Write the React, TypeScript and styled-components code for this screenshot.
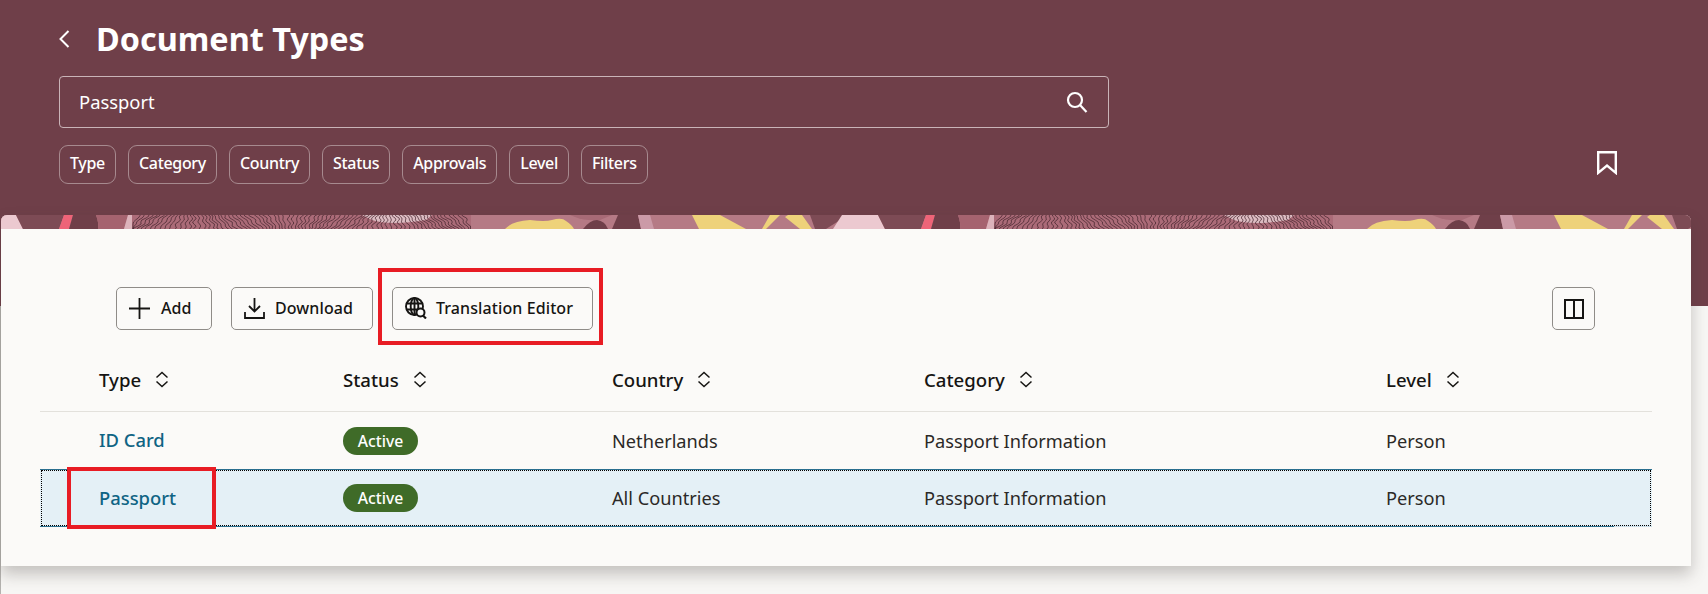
import React from "react";
import styled, { createGlobalStyle } from "styled-components";

const Global = createGlobalStyle`
  html, body { margin: 0; padding: 0; background: #f7f6f4; }
  body { font-family: "Noto Sans", "Open Sans", sans-serif; color: #161513; overflow: hidden; }
`;

const Page = styled.div`
  width: 1708px;
  height: 594px;
  overflow: hidden;
  background: linear-gradient(#b4b2af, #b4b2af) no-repeat 0 0 / 1px 100%, #f7f6f4;
`;

const Hero = styled.header`
  height: 306px;
  box-sizing: border-box;
  background: #6f3f49;
  padding: 19px 91px 0 59px;
  color: #fff;
`;

const TitleRow = styled.div`
  display: flex;
  align-items: center;
  height: 40px;
  gap: 26px;
`;

const BackButton = styled.span`
  display: flex;
  width: 11px;
  color: #fff;
`;

const Title = styled.h1`
  margin: -2px 0 0;
  font-size: 32.4px;
  font-weight: 700;
  line-height: 40px;
`;

const SearchBox = styled.div`
  width: 1050px;
  height: 52px;
  box-sizing: border-box;
  margin-top: 17px;
  padding: 0 20px 0 19px;
  display: flex;
  align-items: center;
  justify-content: space-between;
  border: 1px solid #c9b4b8;
  border-radius: 4px;
  font-size: 18.4px;
`;

const SearchText = styled.span`
  margin-top: -2px;
`;

const ChipRow = styled.div`
  display: flex;
  align-items: center;
  justify-content: space-between;
  margin-top: 17px;
`;

const Chips = styled.div`
  display: flex;
  gap: 12px;
`;

const Chip = styled.span`
  height: 39px;
  box-sizing: border-box;
  display: inline-flex;
  align-items: center;
  padding: 0 10px 3px;
  border: 1px solid #a78a8f;
  border-radius: 9px;
  font-size: 16px;
  font-weight: 500;
  letter-spacing: -0.32px;
`;

const Bookmark = styled.svg`
  margin-top: -3px;
`;

const Card = styled.section`
  position: relative;
  width: 1690px;
  height: 351px;
  margin: -91px 0 0 1px;
  background: #fbfaf8;
  border-radius: 6px 6px 0 0;
  box-shadow: 0 8px 16px rgba(60, 55, 50, 0.28);
`;

const Banner = styled.svg`
  display: block;
  width: 1690px;
  height: 14px;
  border-radius: 6px 6px 0 0;
`;

const Toolbar = styled.div`
  display: flex;
  align-items: center;
  justify-content: space-between;
  padding: 58px 96px 0 115px;
`;

const ToolGroup = styled.div`
  display: flex;
  gap: 19px;
`;

const ToolButton = styled.button<{ $width: number; $gap: number }>`
  position: relative;
  width: ${(p) => p.$width}px;
  height: 43px;
  box-sizing: border-box;
  display: flex;
  align-items: center;
  gap: ${(p) => p.$gap}px;
  padding: 0 12px 1px;
  border: 1px solid #8f8c88;
  border-radius: 5px;
  background: #fbfaf8;
  color: #161513;
  font-family: inherit;
  font-size: 16px;
  font-weight: 500;
  letter-spacing: 0.1px;
`;

const IconButton = styled(ToolButton)`
  justify-content: center;
  padding: 0;
`;

const Callout = styled.span`
  position: absolute;
  left: -15px;
  right: -11px;
  top: -20px;
  bottom: -16px;
  border: 4px solid #e81c24;
  pointer-events: none;
`;

const Table = styled.div`
  margin: 20px 39px 0 39px;
`;

const Columns = `
  display: grid;
  grid-template-columns: 244px 269px 312px 462px 1fr;
  align-items: center;
  padding-left: 59px;
`;

const HeaderRow = styled.div`
  ${Columns}
  box-sizing: border-box;
  height: 62px;
  padding-bottom: 2px;
  border-bottom: 1px solid #e3e1dc;
`;

const HeaderCell = styled.div`
  display: flex;
  align-items: center;
  gap: 14px;
  font-size: 18.6px;
  font-weight: 500;
  color: #161513;
`;

const Row = styled.div<{ $selected?: boolean }>`
  ${Columns}
  position: relative;
  box-sizing: border-box;
  height: ${(p) => (p.$selected ? 58 : 57)}px;
  font-size: 18.2px;
  color: #2b2927;
  ${(p) =>
    p.$selected &&
    `
    background: #e4f0f6;
    border-top: 1px solid #2a6f8f;
    border-bottom: 1px solid #2a6f8f;
    outline: 1px dotted #000;
    outline-offset: -2px;
    &::after {
      content: "";
      position: absolute;
      right: 0;
      bottom: -1px;
      width: 38px;
      height: 1px;
      background: #c9dde8;
    }
  `}
`;

const TypeLink = styled.a`
  margin-top: -2px;
  color: #0f6484;
  font-size: 18.4px;
  font-weight: 500;
`;

const Pill = styled.span`
  display: inline-flex;
  align-items: center;
  justify-content: center;
  width: 75px;
  height: 28px;
  border-radius: 14px;
  background: #3f6b28;
  color: #fff;
  font-size: 15.7px;
  font-weight: 500;
`;

const RowCallout = styled.span`
  position: absolute;
  left: 27px;
  top: -3px;
  width: 149px;
  height: 62px;
  box-sizing: border-box;
  border: 4px solid #e81c24;
  pointer-events: none;
`;

/* ---------- drawings ---------- */

const Sort = () => (
  <svg width="14" height="17" viewBox="0 0 14 17" fill="none" stroke="#161513" strokeWidth="1.5">
    <path d="M1.5 6.5 7 1.5l5.5 5M1.5 10.5 7 15.5l5.5-5" />
  </svg>
);

function rand(seed: number) {
  const x = Math.sin(seed * 127.1) * 43758.5453;
  return x - Math.floor(x);
}

const topoLines: string[] = (() => {
  const out: string[] = [];
  let x = 134;
  let i = 0;
  while (x < 469) {
    const lean = Math.sin(x / 31) * 7;
    const pts: string[] = [];
    for (let y = -1; y <= 15; y += 2) {
      const wig = Math.sin(y * 0.8 + x / 11) * (0.6 + rand(i) * 1.4);
      const px = Math.min(470.5, Math.max(133, x + (lean * (y - 7)) / 7 + wig));
      pts.push(`${px.toFixed(1)} ${y}`);
    }
    out.push("M" + pts.join("L"));
    x += 3.1 + rand(i + 50) * 1.8;
    i++;
  }
  return out;
})();

const Tile = () => (
  <g>
    <rect width="862" height="14" fill="#b57a85" />
    <path d="M0 0H16L23 14H0Z" fill="#ecc9d0" />
    <path d="M16 0H64L59 14H23Z" fill="#7d4b55" />
    <path d="M64 0H73L69 14H59Z" fill="#ee6478" />
    <path d="M73 0H96Q99 8 98 14H69Z" fill="#6f3f49" />
    <path d="M96 0H128L124 14H98Q99 8 96 0Z" fill="#a5636f" />
    <path d="M128 0H136L133 14H124Z" fill="#dcb3bb" />
    <rect x="132" width="339" height="14" fill="#ab6b78" />
    <path d="M362 0H432L426 5Q390 11 372 5Z" fill="#dcbcc2" />
    <g fill="none" stroke="#43242c" strokeWidth="0.7">
      {topoLines.map((d, i) => (
        <path key={i} d={d} />
      ))}
    </g>
    <path d="M505 14Q512 6 530 5Q545 7 552 5Q562 2 566 6Q572 10 574 14Z" fill="#eed27a" />
    <path d="M570 0H612L600 5Q585 6 575 2Z" fill="#a76a76" />
    <path d="M583 14Q590 5 597 5Q605 6 608 14Z" fill="#6f3f49" />
    <path d="M618 0H638L641 14H612Z" fill="#6f3f49" />
    <path d="M638 0H650L654 14H641Z" fill="#cb9aa7" />
    <path d="M692 0H720L746 14H699Z" fill="#eed27a" />
    <path d="M770 0H780L766 14H762Z" fill="#eed27a" />
    <path d="M788 0H802L812 14H800L785 2Z" fill="#eed27a" />
    <path d="M810 0H848L826 14H815Z" fill="#7d4b55" />
    <path d="M842 0H862V14H833Z" fill="#ecc9d0" />
  </g>
);

export default function App() {
  return (
    <Page>
      <Global />
      <Hero>
        <TitleRow>
          <BackButton>
            <svg width="11" height="18" viewBox="0 0 11 18" fill="none" stroke="#fff" strokeWidth="2">
              <path d="M9.5 1 1.5 9l8 8" />
            </svg>
          </BackButton>
          <Title>Document Types</Title>
        </TitleRow>
        <SearchBox>
          <SearchText>Passport</SearchText>
          <svg width="22" height="22" viewBox="0 0 22 22" fill="none" stroke="#fff" strokeWidth="2.2">
            <circle cx="9" cy="9" r="7" />
            <path d="m14 14 6.5 7" />
          </svg>
        </SearchBox>
        <ChipRow>
          <Chips>
            {["Type", "Category", "Country", "Status", "Approvals", "Level", "Filters"].map((c) => (
              <Chip key={c}>{c}</Chip>
            ))}
          </Chips>
          <Bookmark width="20" height="24" viewBox="0 0 20 24" fill="none" stroke="#fff" strokeWidth="2.4">
            <path d="M1.2 1.2h17.6v20.6L10 14.5l-8.8 7.3Z" />
          </Bookmark>
        </ChipRow>
      </Hero>
      <Card>
        <Banner viewBox="0 0 1690 14" preserveAspectRatio="none">
          <g transform="translate(-1 0)">
            <Tile />
          </g>
          <g transform="translate(861 0)">
            <Tile />
          </g>
        </Banner>
        <Toolbar>
          <ToolGroup>
            <ToolButton $width={96} $gap={11}>
              <svg width="21" height="21" viewBox="0 0 21 21" stroke="#161513" strokeWidth="1.8">
                <path d="M10.5 0v21M0 10.5h21" />
              </svg>
              Add
            </ToolButton>
            <ToolButton $width={142} $gap={10}>
              <svg width="21" height="21" viewBox="0 0 21 21" fill="none" stroke="#161513" strokeWidth="1.8">
                <path d="M10.5 0v13M5 8l5.5 5.5L16 8M1 14v6h19v-6" />
              </svg>
              Download
            </ToolButton>
            <ToolButton $width={201} $gap={9}>
              <svg width="22" height="22" viewBox="0 0 22 22" fill="none" stroke="#161513" strokeWidth="1.9">
                <circle cx="9.5" cy="9.5" r="8.5" />
                <ellipse cx="9.5" cy="9.5" rx="3.8" ry="8.5" />
                <path d="M1.5 6.5h16M1.5 12.5h16M9.5 1v17" />
                <circle cx="15.5" cy="15.5" r="4" fill="#fbfaf8" strokeWidth="2" />
                <path d="m18 18.5 3 3" strokeWidth="2.2" />
              </svg>
              Translation Editor
              <Callout />
            </ToolButton>
          </ToolGroup>
          <IconButton $width={43} $gap={0}>
            <svg width="20" height="20" viewBox="0 0 20 20" fill="none" stroke="#161513" strokeWidth="2">
              <path d="M1 1h18v18H1ZM10 1v18" />
            </svg>
          </IconButton>
        </Toolbar>
        <Table>
          <HeaderRow>
            {["Type", "Status", "Country", "Category", "Level"].map((h) => (
              <HeaderCell key={h}>
                {h}
                <Sort />
              </HeaderCell>
            ))}
          </HeaderRow>
          <Row>
            <TypeLink>ID Card</TypeLink>
            <div><Pill>Active</Pill></div>
            <span>Netherlands</span>
            <span>Passport Information</span>
            <span>Person</span>
          </Row>
          <Row $selected>
            <TypeLink>Passport</TypeLink>
            <div><Pill>Active</Pill></div>
            <span>All Countries</span>
            <span>Passport Information</span>
            <span>Person</span>
            <RowCallout />
          </Row>
        </Table>
      </Card>
    </Page>
  );
}
